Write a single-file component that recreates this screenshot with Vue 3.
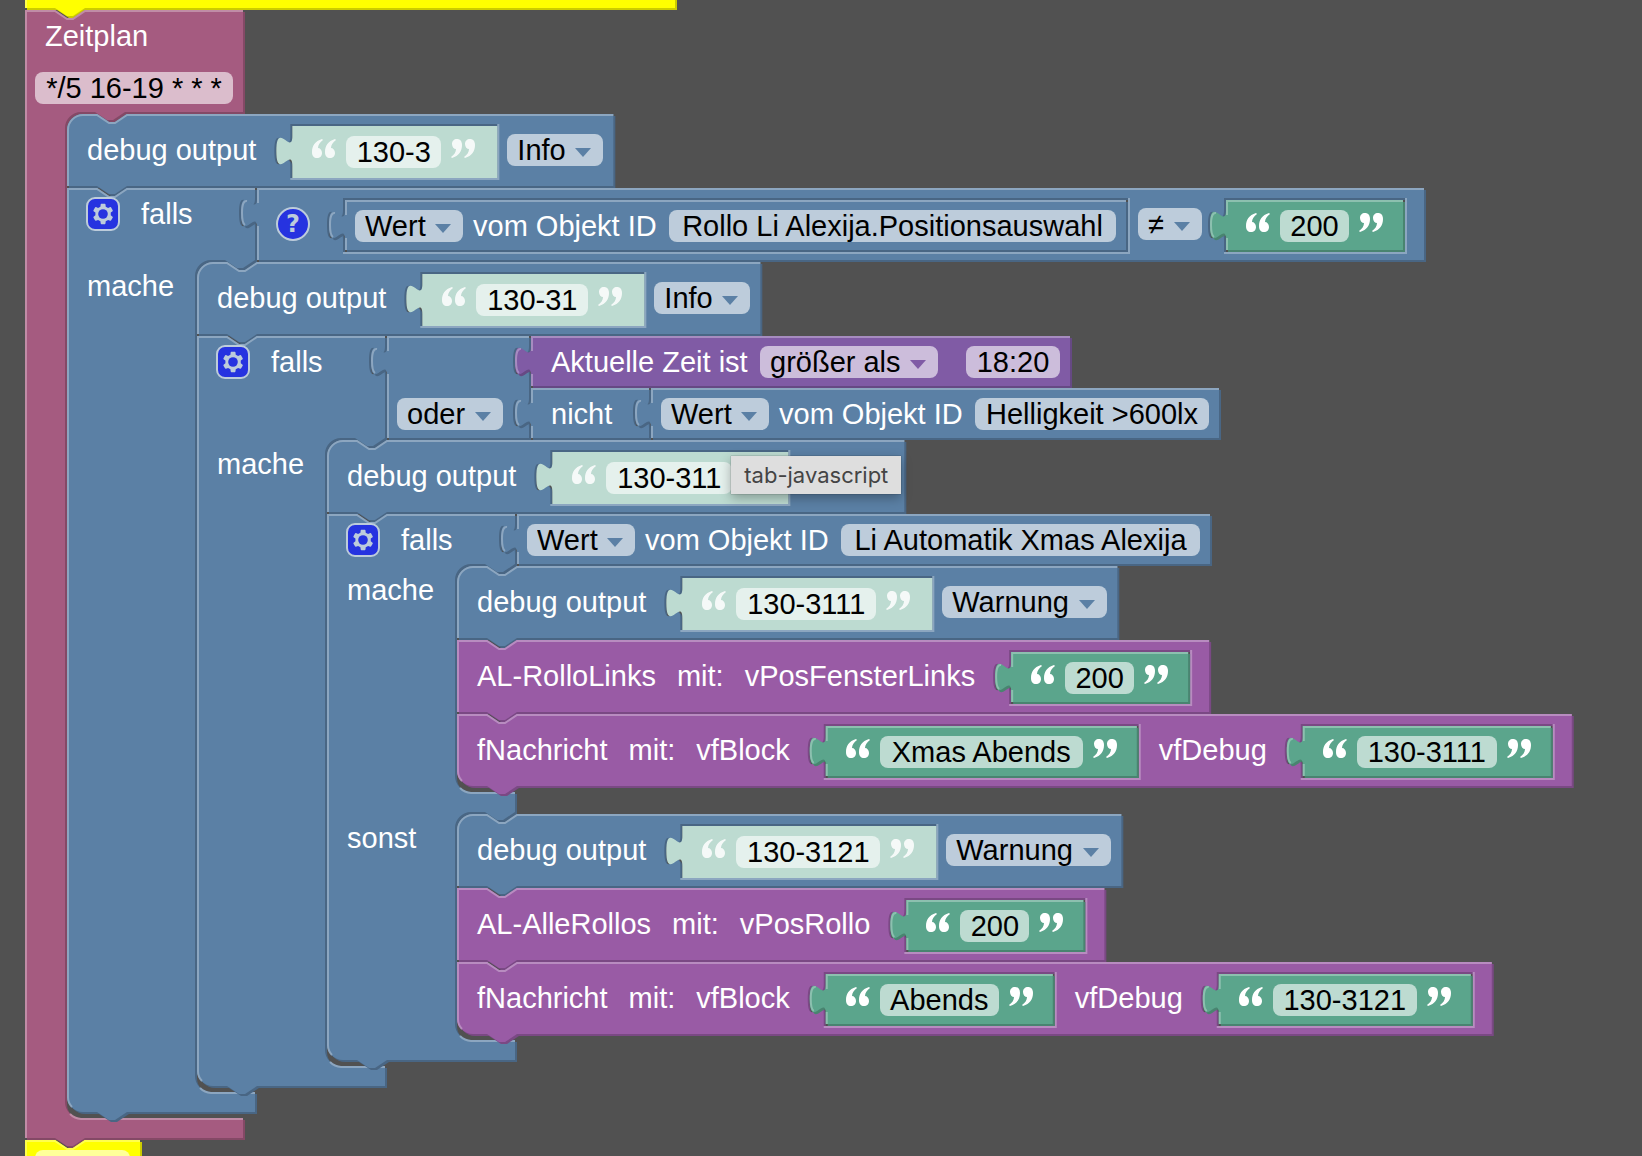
<script setup>
import { h, nextTick, onBeforeUnmount, onMounted, ref } from 'vue'

const TONES = {
  yellow: '#ffff00',
  pink: '#a55b80',
  blue: '#5b80a5',
  time: '#805ba5',
  call: '#995ba5',
  text: '#5ba58c',
  shadow: '#bddbd1',
}

const mix = (hex, target, amount) => {
  const channels = [1, 3, 5].map((i) => parseInt(hex.slice(i, i + 2), 16))
  return `rgb(${channels.map((c) => Math.round(c + (target - c) * amount)).join(',')})`
}

/* ---- small building blocks ---- */

const Field = ({ value, width, label }) =>
  h('input', { class: 'field', value, 'aria-label': label || 'Text', style: { width: `${width}px` } })
Field.props = ['value', 'width', 'label']

const Choice = ({ value, width, label }) =>
  h('span', { class: 'choice', style: { width: `${width}px` } }, [
    h('select', { 'aria-label': label || value }, [h('option', value)]),
    h('svg', { class: 'arrow', viewBox: '0 0 16 9', 'aria-hidden': 'true' }, [h('path', { d: 'M0 0H16L8 9Z' })]),
  ])
Choice.props = ['value', 'width', 'label']

const QUOTE = 'M10 0C3 2 0 7 0 13c0 4 2 6 5 6s5-2 5-5-2-5-4-5c0-3 2-6 5-8z'
const Quote = ({ close }) =>
  h('svg', { class: 'quote', viewBox: '0 0 24 19', 'aria-hidden': 'true' }, [
    h('g', { transform: close ? 'rotate(180 12 9.5)' : undefined }, [
      h('path', { d: QUOTE }),
      h('path', { d: QUOTE, transform: 'translate(13 0)' }),
    ]),
  ])
Quote.props = ['close']

const TextBlock = ({ value, width, shadow }) =>
  h('div', { class: ['block', 'value', 'text-block', shadow ? 'shadow' : 'text'], 'data-tone': shadow ? 'shadow' : 'text' }, [
    h(Quote),
    h(Field, { value, width }),
    h(Quote, { close: true }),
  ])
TextBlock.props = ['value', 'width', 'shadow']

const DebugBlock = ({ value, width, level }) =>
  h('div', { class: 'block statement blue', 'data-tone': 'blue' }, [
    h('div', { class: 'head roomy' }, [
      h('span', { class: 'label' }, 'debug output'),
      h(TextBlock, { value, width, shadow: true }),
      h(Choice, { value: level, width: level === 'Info' ? 96 : 165, label: 'Stufe' }),
    ]),
  ])
DebugBlock.props = ['value', 'width', 'level']

const ValueOf = ({ id, width }) =>
  h('div', { class: 'block value fields blue', 'data-tone': 'blue' }, [
    h(Choice, { value: 'Wert', width: 108, label: 'Attribut' }),
    h('span', { class: 'label' }, 'vom Objekt ID'),
    h(Field, { value: id, width, label: 'Objekt ID' }),
  ])
ValueOf.props = ['id', 'width']

const GEAR =
  'm4.203,7.296 0,1.368 -0.92,0.677 -0.11,0.41 0.9,1.559 0.41,0.11 1.043,-0.457 1.187,0.683 0.127,1.134 0.3,0.3 1.8,0 0.3,-0.299 0.127,-1.138 1.185,-0.682 1.046,0.458 0.409,-0.11 0.9,-1.559 -0.11,-0.41 -0.92,-0.677 0,-1.366 0.92,-0.677 0.11,-0.41 -0.9,-1.559 -0.409,-0.109 -1.046,0.458 -1.185,-0.682 -0.127,-1.138 -0.3,-0.299 -1.8,0 -0.3,0.3 -0.126,1.135 -1.187,0.682 -1.043,-0.457 -0.41,0.11 -0.899,1.559 0.108,0.409z'
const FallsHead = () =>
  h('div', { class: 'own falls' }, [
    h('button', { class: 'gear', type: 'button', 'aria-label': 'Einstellungen' }, [
      h('svg', { viewBox: '0 0 16 16', 'aria-hidden': 'true' }, [
        h('path', { class: 'cog', d: GEAR }),
        h('circle', { cx: 8, cy: 8, r: 2.4 }),
      ]),
    ]),
    h('span', { class: 'label' }, 'falls'),
  ])

/* ---- block outlines, computed from the laid-out elements ---- */

const workspace = ref(null)
const shapes = ref([])

const TAB_DOWN = 'c0,20 -16,-16 -16,15 s16,-5 16,15'
const TAB_UP = 'c0,-20 -16,16 -16,-15 s16,5 16,-15'
const NOTCH_RIGHT = 'l12,8 6,0 12,-8'
const NOTCH_LEFT = 'l-12,8 -6,0 -12,-8'

function outline(el, origin) {
  const box = (node) => {
    const r = node.getBoundingClientRect()
    return { x: r.left - origin.left, y: r.top - origin.top, r: r.right - origin.left, b: r.bottom - origin.top }
  }
  const owner = (node) => node.parentElement.closest('.block')
  const mine = (selector) => [...el.querySelectorAll(selector)].filter((n) => owner(n) === el)

  const tone = TONES[el.dataset.tone]
  const { x, y, r: fullRight, b: fullBottom } = box(el)
  const isValue = el.classList.contains('value')

  if (el.dataset.tone === 'shadow') {
    return {
      fill: tone,
      body: `M${x},${y} H${fullRight} V${fullBottom} H${x} V${y + 40} ${TAB_UP} Z`,
    }
  }

  const b = fullBottom - 2
  const values = mine('.block.value')
  const external = values.filter((v) => v.parentElement.classList.contains('external')).map(box)
  const inline = values.filter((v) => !v.parentElement.classList.contains('external'))
  const head = mine('.own')[0]
  const right = (head ? box(head).r : fullRight) - 2
  const arms = mine('.arm').map((arm) => ({
    cavity: box(arm.querySelector('.stack')),
    bar: box(arm.nextElementSibling),
  }))

  const previous = el.previousElementSibling
  const next = el.nextElementSibling
  const roundTop = !isValue && !previous
  const roundBottom = !isValue && !next

  let body
  let light
  if (isValue) {
    body = `M${x},${y} H${right}`
    light = `M${x + 1},${b} V${y + 38} M${x + 1},${y + 15} V${y + 1} H${right} M${x - 10},${y + 13} q-5,-1 -5,12 q0,10 3,12`
  } else {
    body = roundTop ? `M${x},${y + 16} a16,16 0 0 1 16,-16` : `M${x},${y}`
    body += ` H${x + 30} ${NOTCH_RIGHT} H${right}`
    light = roundBottom
      ? `M${x + 5},${b - 5} A15,15 0 0 1 ${x + 1},${b - 16}`
      : `M${x + 1},${b}`
    light += roundTop ? ` V${y + 16} A15,15 0 0 1 ${x + 16},${y + 1}` : ` V${y + 1}`
    light += ` H${x + 30} ${NOTCH_RIGHT} H${right}`
  }
  for (const v of external) body += ` V${v.y + 10} ${TAB_DOWN}`

  for (const { cavity, bar } of arms) {
    const cx = cavity.x - 2
    const cy = cavity.y - 2
    const barRight = bar.r - 2
    body += ` V${cy} H${cx + 60} ${NOTCH_LEFT} H${cx + 16} a16,16 0 0 0 -16,16`
    body += ` V${bar.y - 16} a16,16 0 0 0 16,16 H${barRight}`
    light += ` M${cx + 5},${bar.y - 4} A17,17 0 0 0 ${cx + 16},${bar.y + 1} H${barRight}`
  }

  body += ` V${b}`
  if (isValue) body += ` H${x} V${y + 40} ${TAB_UP} Z`
  else {
    body += ` H${x + 60} ${NOTCH_LEFT}`
    body += roundBottom ? ` H${x + 16} a16,16 0 0 1 -16,-16 Z` : ` H${x} Z`
  }

  for (const node of inline) {
    const v = box(node)
    const hx = v.x - 2
    const hy = v.y - 2
    body += ` M${hx},${hy} H${v.r} V${v.b} H${hx} V${hy + 42} ${TAB_UP} Z`
    light += ` M${v.r + 1},${hy} V${v.b + 1} H${hx}`
  }

  return { fill: tone, body, light, dark: mix(tone, 0, 0.2), glow: mix(tone, 255, 0.3) }
}

function draw() {
  const root = workspace.value
  if (!root) return
  const origin = root.getBoundingClientRect()
  shapes.value = [...root.querySelectorAll('.block')].map((el) => outline(el, origin))
}

let observer
onMounted(async () => {
  await nextTick()
  draw()
  observer = new ResizeObserver(draw)
  observer.observe(workspace.value)
  document.fonts?.ready.then(draw)
})
onBeforeUnmount(() => observer?.disconnect())
</script>

<template>
  <main ref="workspace" class="workspace">
    <svg class="shapes" aria-hidden="true">
      <g v-for="(shape, i) in shapes" :key="i">
        <path v-if="shape.dark" :d="shape.body" :fill="shape.dark" fill-rule="evenodd" transform="translate(2 2)" />
        <path :d="shape.body" :fill="shape.fill" fill-rule="evenodd" />
        <path v-if="shape.light" :d="shape.light" fill="none" :stroke="shape.glow" stroke-width="2" />
      </g>
    </svg>

    <div class="program">
      <div class="block statement comment-top" data-tone="yellow"></div>

      <div class="block statement pink" data-tone="pink">
        <div class="own schedule">
          <span class="label">Zeitplan</span>
          <Field value="*/5 16-19 * * *" :width="198" label="Zeitplan" />
        </div>
        <div class="arm">
          <div class="gutter narrow"></div>
          <div class="stack">
            <DebugBlock value="130-3" :width="95" level="Info" />

            <div class="block statement blue" data-tone="blue">
              <div class="head">
                <FallsHead />
                <div class="external">
                  <div class="block value compare blue" data-tone="blue">
                    <button class="help" type="button" aria-label="Hilfe">?</button>
                    <ValueOf id="Rollo Li Alexija.Positionsauswahl" :width="447" />
                    <Choice value="≠" :width="64" label="Vergleich" />
                    <TextBlock value="200" :width="69" />
                  </div>
                </div>
              </div>
              <div class="arm">
                <div class="gutter"><span class="label">mache</span></div>
                <div class="stack">
                  <DebugBlock value="130-31" :width="112" level="Info" />

                  <div class="block statement blue" data-tone="blue">
                    <div class="head">
                      <FallsHead />
                      <div class="external">
                        <div class="block value operation blue" data-tone="blue">
                          <div class="own oder">
                            <Choice value="oder" :width="106" label="Verknüpfung" />
                          </div>
                          <div class="external">
                            <div class="block value time" data-tone="time">
                              <span class="label">Aktuelle Zeit ist</span>
                              <Choice value="größer als" :width="178" label="Zeitvergleich" />
                              <Field class="clock" value="18:20" :width="94" label="Uhrzeit" />
                            </div>
                            <div class="block value operation blue" data-tone="blue">
                              <div class="own nicht"><span class="label">nicht</span></div>
                              <div class="external">
                                <ValueOf id="Helligkeit >600lx" :width="234" />
                              </div>
                            </div>
                          </div>
                        </div>
                      </div>
                    </div>
                    <div class="arm">
                      <div class="gutter"><span class="label">mache</span></div>
                      <div class="stack">
                        <div class="tip-anchor block statement blue" data-tone="blue">
                          <div class="head roomy">
                            <span class="label">debug output</span>
                            <TextBlock value="130-311" :width="126" :shadow="true" />
                            <Choice value="Info" :width="96" label="Stufe" />
                          </div>
                          <div class="tooltip" role="tooltip">tab-javascript</div>
                        </div>

                        <div class="block statement blue" data-tone="blue">
                          <div class="head">
                            <FallsHead />
                            <div class="external">
                              <ValueOf id="Li Automatik Xmas Alexija" :width="359" />
                            </div>
                          </div>
                          <div class="arm">
                            <div class="gutter"><span class="label">mache</span></div>
                            <div class="stack">
                              <DebugBlock value="130-3111" :width="140" level="Warnung" />
                              <div class="block statement call" data-tone="call">
                                <div class="head roomy">
                                  <span class="label">AL-RolloLinks</span>
                                  <span class="label">mit:</span>
                                  <span class="label">vPosFensterLinks</span>
                                  <TextBlock value="200" :width="69" />
                                </div>
                              </div>
                              <div class="block statement call" data-tone="call">
                                <div class="head roomy">
                                  <span class="label">fNachricht</span>
                                  <span class="label">mit:</span>
                                  <span class="label">vfBlock</span>
                                  <TextBlock value="Xmas Abends" :width="203" />
                                  <span class="label">vfDebug</span>
                                  <TextBlock value="130-3111" :width="140" />
                                </div>
                              </div>
                            </div>
                          </div>
                          <div class="bar"></div>
                          <div class="arm">
                            <div class="gutter"><span class="label">sonst</span></div>
                            <div class="stack">
                              <DebugBlock value="130-3121" :width="144" level="Warnung" />
                              <div class="block statement call" data-tone="call">
                                <div class="head roomy">
                                  <span class="label">AL-AlleRollos</span>
                                  <span class="label">mit:</span>
                                  <span class="label">vPosRollo</span>
                                  <TextBlock value="200" :width="69" />
                                </div>
                              </div>
                              <div class="block statement call" data-tone="call">
                                <div class="head roomy">
                                  <span class="label">fNachricht</span>
                                  <span class="label">mit:</span>
                                  <span class="label">vfBlock</span>
                                  <TextBlock value="Abends" :width="119" />
                                  <span class="label">vfDebug</span>
                                  <TextBlock value="130-3121" :width="144" />
                                </div>
                              </div>
                            </div>
                          </div>
                          <div class="bar"></div>
                        </div>
                      </div>
                    </div>
                    <div class="bar"></div>
                  </div>
                </div>
              </div>
              <div class="bar"></div>
            </div>
          </div>
        </div>
        <div class="bar wide"></div>
      </div>

      <div class="block statement yellow comment-bottom" data-tone="yellow">
        <Field value="130-4" :width="95" label="Kommentar" />
      </div>
    </div>
  </main>
</template>

<style>
body {
  margin: 0;
  background: #515151;
}
</style>

<style scoped>
.workspace {
  position: relative;
  height: 100vh;
  overflow: hidden;
  background: #515151;
  color: #fff;
  font: 29px/32px "Liberation Sans", Arial, sans-serif;
  white-space: nowrap;
}
.shapes {
  position: absolute;
  inset: 0;
  width: 100%;
  height: 100%;
}
.program {
  position: relative;
  display: flex;
  flex-direction: column;
  align-items: flex-start;
  margin: -42px 0 0 25px;
}
.comment-top {
  width: 652px;
  height: 52px;
}
.comment-bottom {
  padding: 10px 12px 10px 10px;
}
.workspace :deep(.block) {
  display: flex;
  flex-shrink: 0;
}
.workspace :deep(.statement) {
  flex-direction: column;
  align-items: flex-start;
}
.workspace :deep(.blue) {
  --tone: #5b80a5;
  --chip: #bdccdb;
}
.workspace :deep(.pink) {
  --chip: #dbbdcc;
}
.workspace :deep(.time) {
  --tone: #805ba5;
  --chip: #ccbddb;
}
.workspace :deep(.text) {
  --chip: #bddbd1;
}
.workspace :deep(.shadow) {
  --chip: #e5f1ed;
}
.workspace :deep(.yellow) {
  --chip: #ffff99;
}

/* rows */
.workspace :deep(.head) {
  display: flex;
}
.workspace :deep(.roomy) {
  box-sizing: border-box;
  height: 74px;
  padding: 20px 21px 0 20px;
}
.workspace :deep(.roomy > .label + .label) {
  margin-left: 21px;
}
.workspace :deep(.roomy > .text-block) {
  margin: -8px 0 0 36px;
}
.workspace :deep(.roomy > .text-block + .label) {
  margin-left: 20px;
}
.workspace :deep(.roomy > .text-block + .choice) {
  margin: 0 -9px 0 10px;
}
.external {
  display: flex;
  flex-direction: column;
  align-items: flex-start;
}
.arm {
  display: flex;
  align-items: flex-start;
}
.gutter {
  box-sizing: border-box;
  width: 130px;
  padding: 8px 0 0 20px;
}
.gutter.narrow {
  width: 42px;
}
.stack {
  display: flex;
  flex-direction: column;
  align-items: flex-start;
  padding-bottom: 4px;
}
.bar {
  width: 190px;
  height: 22px;
}
.bar.wide {
  width: 220px;
}

/* block heads */
.workspace :deep(.own) {
  box-sizing: border-box;
}
.schedule {
  display: flex;
  flex-direction: column;
  align-items: flex-start;
  gap: 20px;
  width: 220px;
  padding: 10px;
}
.schedule > .label {
  padding-left: 10px;
}
.workspace :deep(.falls) {
  display: flex;
  gap: 21px;
  width: 190px;
  padding: 9px 0 0 19px;
}
.workspace :deep(.falls > .label) {
  padding-top: 1px;
}
.oder {
  display: flex;
  align-items: flex-end;
  width: 144px;
  padding: 0 0 10px 10px;
}
.nicht {
  width: 120px;
  padding: 10px 0 0 20px;
}

/* value blocks */
.workspace :deep(.fields) {
  gap: 10px;
  height: 32px;
  padding: 10px 12px 10px 10px;
}
.workspace :deep(.fields > .label) {
  width: 186px;
}
.workspace :deep(.text-block) {
  gap: 10px;
  height: 32px;
  padding: 10px 22px 10px 20px;
}
.compare {
  align-items: flex-start;
  height: 53px;
  padding: 12px 21px 9px 19px;
}
.compare > :deep(.fields) {
  margin: 0 10px 0 35px;
}
.compare > :deep(.choice) {
  margin-top: 8px;
}
.compare > :deep(.text-block) {
  margin-left: 24px;
}
.time {
  gap: 10px;
  padding: 10px 12px 10px 20px;
}
.time > .label {
  width: 199px;
}
.time > .clock {
  margin-left: 18px;
}

/* fields */
.workspace :deep(.label) {
  display: block;
}
.workspace :deep(.field),
.workspace :deep(.choice) {
  box-sizing: border-box;
  flex-shrink: 0;
  height: 32px;
  border: 0;
  border-radius: 8px;
  background: var(--chip);
  color: #000;
  font: inherit;
}
.workspace :deep(.field) {
  display: block;
  padding: 0;
  text-align: center;
  outline: 0;
}
.workspace :deep(.choice) {
  position: relative;
  display: block;
}
.workspace :deep(.choice select) {
  appearance: none;
  display: block;
  width: 100%;
  height: 32px;
  margin: 0;
  padding: 0 0 0 10px;
  border: 0;
  background: none;
  color: #000;
  font: inherit;
}
.workspace :deep(.arrow) {
  position: absolute;
  top: 14px;
  right: 12px;
  width: 16px;
  height: 9px;
  fill: var(--tone);
  pointer-events: none;
}
.workspace :deep(.quote) {
  width: 24px;
  height: 19px;
  margin-top: 3px;
  fill: #fff;
}
.workspace :deep(.shadow .quote) {
  opacity: 0.85;
}
.workspace :deep(.gear),
.help {
  box-sizing: border-box;
  flex-shrink: 0;
  width: 34px;
  height: 34px;
  padding: 0;
  border: 2px solid #bdccdb;
  background: #2633e0;
}
.workspace :deep(.gear) {
  border-radius: 9px;
}
.workspace :deep(.gear svg) {
  display: block;
  width: 32px;
  height: 32px;
  margin: -1px;
}
.workspace :deep(.cog) {
  fill: #bdccdb;
}
.workspace :deep(.gear circle) {
  fill: #2633e0;
}
.help {
  margin-top: 7px;
  border-radius: 50%;
  color: #bdccdb;
  font: bold 24px/30px "DejaVu Sans", sans-serif;
}

.tip-anchor {
  position: relative;
}
.tooltip {
  position: absolute;
  top: 16px;
  right: 5px;
  padding: 0 13px;
  background: #dedede;
  box-shadow: 0 4px 12px rgba(0, 0, 0, 0.3), 0 0 1px rgba(0, 0, 0, 0.5);
  color: #444;
  font: 22px/38px Inter, sans-serif;
}
</style>
